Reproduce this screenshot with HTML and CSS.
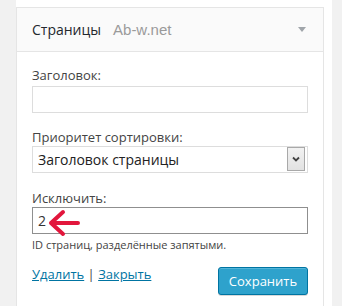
FILE: index.html
```html
<!DOCTYPE html>
<html lang="ru">
<head>
	<meta charset="UTF-8">
	<title>Виджет: Страницы</title>
	<link rel="stylesheet" href="styles.css">
</head>
<body>
	<div class="sidebar">
		<div class="widget">
			<div class="widget-top">
				<span class="widget-title">Страницы</span>
				<span class="watermark">Ab-w.net</span>
				<span class="widget-toggle"></span>
			</div>
			<form class="widget-content">
				<p class="field field-first">
					<label for="pages_title">Заголовок:</label>
					<input type="text" id="pages_title" class="text-input">
				</p>
				<p class="field">
					<label for="pages_sort">Приоритет сортировки:</label>
					<span class="select-wrap">
						<select id="pages_sort">
							<option value="post_title">Заголовок страницы</option>
							<option value="menu_order">Порядок страниц</option>
							<option value="ID">ID страницы</option>
						</select>
						<span class="select-btn">
							<svg width="8" height="6" viewBox="0 0 8 6"><path d="M1 1.5 L4 4.5 L7 1.5" fill="none" stroke="#444" stroke-width="1.8"/></svg>
						</span>
					</span>
				</p>
				<p class="field field-last">
					<label for="pages_exclude">Исключить:</label>
					<span class="input-wrap">
						<input type="text" id="pages_exclude" class="text-input focused" value="2">
						<svg class="red-arrow" width="34" height="28" viewBox="0 0 34 28"><path d="M15 3 L3 14 L15 25 M3 14 L30 14" fill="none" stroke="#e2163c" stroke-width="4" stroke-linecap="round" stroke-linejoin="round"/></svg>
					</span>
				</p>
				<p class="hint">ID страниц, разделённые запятыми.</p>
				<div class="widget-actions">
					<div class="links">
						<a href="#">Удалить</a> | <a href="#">Закрыть</a>
					</div>
					<button type="button" class="save-btn">Сохранить</button>
				</div>
			</form>
		</div>
	</div>
</body>
</html>
```

FILE: styles.css
```css
*{
	margin: 0;
	padding: 0;
	box-sizing: border-box;
}
body{
	background-color: #f1f1f1;
	font-family: "Open Sans", "Noto Sans", sans-serif;
	font-size: 13px;
	color: #444;
}
.sidebar{
	margin-left: 16px;
	width: 316px;
	min-height: 306px;
	padding: 7px 8px 0 0;
	background-color: #fff;
}
.widget{
	border: 1px solid #e5e5e5;
	border-bottom: none;
	background-color: #fff;
	min-height: 299px;
}
.widget-top{
	display: flex;
	align-items: center;
	height: 44px;
	padding: 0 17px 1px 15px;
	background-color: #fafafa;
	border-bottom: 1px solid #e5e5e5;
}
.widget-title{
	font-size: 14px;
	color: #23282d;
}
.watermark{
	margin-left: 12px;
	font-family: "Liberation Sans", Arial, sans-serif;
	font-size: 15px;
	color: #9a9a9a;
}
.widget-toggle{
	margin-left: auto;
	width: 0;
	height: 0;
	border-left: 4px solid transparent;
	border-right: 4px solid transparent;
	border-top: 5px solid #a0a5aa;
}
.widget-content{
	padding: 14px 15px 0 15px;
}
.field{
	margin-bottom: 15px;
}
.field-last{
	margin-bottom: 0;
}
.field label{
	display: block;
	line-height: 18px;
	margin-bottom: 2px;
}
.field + .field label{
	margin-bottom: 0;
}
.text-input{
	display: block;
	width: 100%;
	height: 27px;
	border: 1px solid #ddd;
	padding: 0 5px;
	font-family: "Open Sans", "Noto Sans", sans-serif;
	font-size: 14px;
	color: #333;
	background-color: #fff;
	outline: none;
}
.text-input.focused{
	border-color: #8f8f8f;
}
.field-last{
	margin-top: 16px;
}
.select-wrap{
	display: flex;
	align-items: center;
	height: 27px;
	border: 1px solid #ddd;
	background-color: #fff;
	padding-right: 2px;
}
.select-wrap select{
	flex: 1;
	height: 100%;
	border: none;
	outline: none;
	appearance: none;
	-webkit-appearance: none;
	background: transparent;
	padding-left: 5px;
	font-family: "Open Sans", "Noto Sans", sans-serif;
	font-size: 14px;
	color: #222;
}
.select-btn{
	display: flex;
	align-items: center;
	justify-content: center;
	width: 18px;
	height: 24px;
	margin-bottom: 1px;
	border: 1px solid #a9a9a9;
	background: linear-gradient(#f2f2f2, #e2e2e2);
}
.input-wrap{
	display: block;
	position: relative;
}
.red-arrow{
	position: absolute;
	left: 16px;
	top: 2px;
}
.hint{
	margin-top: 3px;
	font-size: 11px;
	line-height: 15px;
	color: #444;
}
.widget-actions{
	display: flex;
	justify-content: space-between;
	align-items: flex-start;
	margin-top: 13px;
}
.links{
	line-height: 18px;
	color: #444;
}
.links a{
	color: #0074a2;
	text-decoration: underline;
}
.save-btn{
	margin-top: 2px;
	width: 90px;
	height: 28px;
	border: 1px solid #0074a2;
	border-radius: 3px;
	background-color: #2ea2cc;
	box-shadow: inset 0 1px 0 rgba(120,200,230,0.5), 0 1px 0 rgba(0,0,0,0.15);
	color: #fff;
	font-family: "Open Sans", "Noto Sans", sans-serif;
	font-size: 13px;
	cursor: pointer;
}
```
